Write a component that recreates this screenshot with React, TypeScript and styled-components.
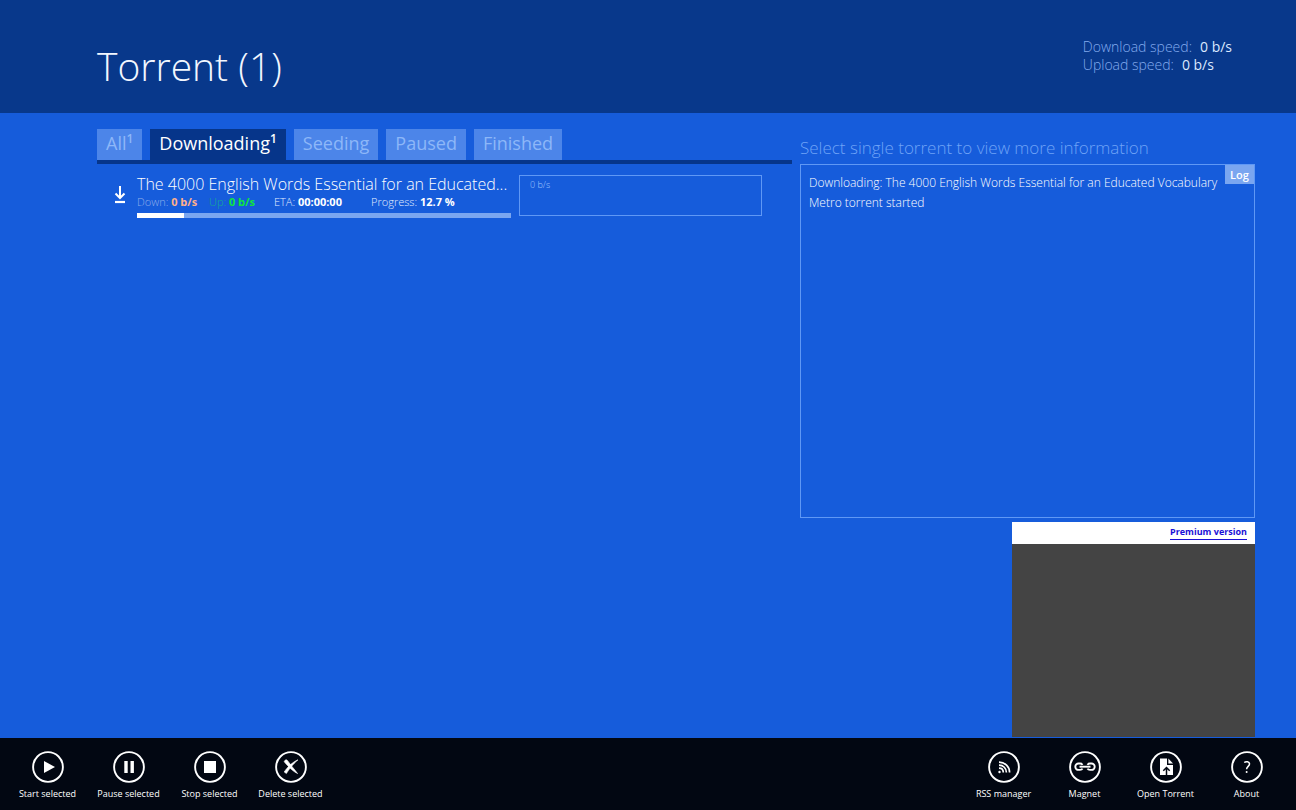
import React from "react";
import styled, { createGlobalStyle } from "styled-components";

const GlobalStyle = createGlobalStyle`
  * { box-sizing: border-box; }
  body {
    margin: 0;
    background: #165cdb;
    color: #fff;
    font-family: "Open Sans", "Noto Sans", sans-serif;
  }
  button { font: inherit; color: inherit; border: 0; margin: 0; cursor: pointer; }
`;

const Page = styled.div`
  min-height: 100vh;
  display: flex;
  flex-direction: column;
`;

const Header = styled.header`
  height: 113px;
  padding: 0 64px 0 97px;
  background: #08388b;
  display: flex;
  justify-content: space-between;
  align-items: flex-start;
`;

const Title = styled.h1`
  margin: 36px 0 0;
  font-size: 39px;
  line-height: 60px;
  font-weight: 300;
  color: #f2f7ff;
`;

const Speeds = styled.dl`
  margin: 38px 0 0;
  font-size: 14px;
  line-height: 18px;
`;

const Speed = styled.div`
  display: flex;
  gap: 8px;
  dt { font-weight: 300; color: #83abee; }
  dd { margin: 0; color: #dce9ff; }
`;

const Main = styled.main`
  flex: 1;
  display: grid;
  grid-template-columns: minmax(0, 695fr) minmax(0, 455fr);
  gap: 8px;
  padding: 16px 41px 0 97px;
`;

const Tabs = styled.div`
  display: flex;
  gap: 8px;
  border-bottom: 4px solid #06358a;
`;

const Tab = styled.button<{ $active?: boolean }>`
  && { color: ${(p) => (p.$active ? "#fff" : "#8db7f8")}; }
  height: 31px;
  padding: 0 9px 2px;
  background: ${(p) => (p.$active ? "#06358a" : "#4c85e9")};
  font-size: 18px;
  line-height: 29px;
  white-space: nowrap;
  sup { font-size: 12px; line-height: 1px; vertical-align: 7px; font-weight: 600; }
`;

const Torrent = styled.article`
  display: grid;
  grid-template-columns: 24px minmax(0, 374fr) minmax(0, 243fr);
  column-gap: 8px;
  padding: 11px 30px 0 8px;
`;

const TorrentIcon = styled.svg`
  width: 14px;
  height: 19px;
  margin: 10px 0 0 8px;
`;

const Name = styled.h2`
  margin: 0;
  font-size: 16px;
  line-height: 18px;
  font-weight: 300;
  white-space: nowrap;
`;

const Stats = styled.div`
  display: grid;
  grid-template-columns: 72px 65px 97px auto;
  font-size: 11px;
  line-height: 18px;
  white-space: nowrap;
`;

const Stat = styled.span<{ $label?: string; $value?: string }>`
  font-weight: 300;
  color: ${(p) => p.$label ?? "#e3eeff"};
  b { color: ${(p) => p.$value ?? "#fff"}; font-weight: 700; }
`;

const Track = styled.div`
  height: 5px;
  margin-top: 2px;
  background: #7aa6f0;
`;

const Fill = styled.div`
  height: 100%;
  background: #fff;
`;

const Chart = styled.div`
  height: 41px;
  padding: 3px 10px;
  border: 1px solid #5f98f5;
  font-size: 9px;
  line-height: 12px;
  font-weight: 300;
  color: #a3c6ff;
`;

const Side = styled.aside`
  display: flex;
  flex-direction: column;
`;

const Hint = styled.h2`
  margin: 4px 0 2px;
  font-size: 17px;
  line-height: 29px;
  font-weight: 300;
  color: #6fa3f7;
  white-space: nowrap;
`;

const LogBox = styled.section`
  position: relative;
  flex: 1;
  min-height: 120px;
  padding: 8px;
  border: 1px solid #5f98f5;
  font-size: 12px;
  line-height: 20px;
  font-weight: 300;
  color: #fff;
  white-space: nowrap;
  p { margin: 0; }
`;

const LogTab = styled.button`
  position: absolute;
  top: 0;
  right: 0;
  width: 29px;
  height: 19px;
  padding: 0;
  background: #7aa6f0;
  font-size: 12px;
  && { font-weight: 600; font-size: 11px; line-height: 18px; }
`;

const Ad = styled.section`
  align-self: flex-end;
  width: 243px;
  margin: 4px 0 1px;
  background: #444;
`;

const AdBar = styled.div`
  display: flex;
  justify-content: flex-end;
  height: 22px;
  padding: 2px 8px 0;
  background: #fff;
`;

const AdLink = styled.a`
  height: 16px;
  border-bottom: 1px solid #1a0fd6;
  color: #1a0fd6;
  font-size: 9px;
  line-height: 15px;
  font-weight: 700;
  text-decoration: none;
`;

const AdBody = styled.div`
  height: 193px;
`;

const AppBar = styled.footer`
  display: flex;
  justify-content: space-between;
  height: 72px;
  padding: 0 9px 0 7px;
  background: #020712;
`;

const Group = styled.div`
  display: flex;
`;

const Command = styled.button`
  width: 81px;
  padding: 13px 0 0;
  background: none;
  display: flex;
  flex-direction: column;
  align-items: center;
  && { font-size: 9px; line-height: 22px; }
  white-space: nowrap;
  svg { width: 32px; height: 32px; flex: none; }
`;

const icons: Record<string, React.ReactNode> = {
  play: <path d="M12 10v12l11-6z" fill="#fff" />,
  pause: <path d="M11.300 10h3.400v12h-3.400zM17.500 10h3.400v12h-3.400z" fill="#fff" />,
  stop: <path d="M10 10h12v12H10z" fill="#fff" />,
  remove: (
    <g fill="#fff" stroke="#fff" strokeWidth="0.600" strokeLinejoin="round">
      <path d="M9.200 10.800C9.900 8.600 11.600 8.200 12.800 9.900C15.400 13.600 18.800 17.600 22.600 22.600C18 20.600 13.300 15.600 9.200 10.800z" />
      <path d="M23 8.800C18 10.800 12.400 15.900 9.200 21L11.400 22.500C14.200 17.800 18.200 12.900 23 8.800z" />
    </g>
  ),
  rss: (
    <>
      <circle cx="11.500" cy="21" r="1.200" fill="#fff" />
      <path d="M11 17.200c2.600 0 4.300 1.700 4.300 4.300M11 14.200c4.300 0 7.400 3 7.400 7.300M11 11.200c6 0 10.600 4.400 10.600 10.300" stroke="#fff" strokeWidth="1.700" fill="none" />
    </>
  ),
  magnet: (
    <g stroke="#fff" strokeWidth="1.900" fill="none">
      <path d="M13.500 13.800C13 12.800 12.200 12.500 11 12.500H9.500a3.200 3.200 0 0 0 0 6.400H11c1.200 0 2-.3 2.500-1.300M18.500 13.800c.5-1 1.300-1.300 2.500-1.300h1.500a3.200 3.200 0 0 1 0 6.400H21c-1.200 0-2-.3-2.500-1.300" />
      <path d="M10.500 15.700h11" />
    </g>
  ),
  open: (
    <>
      <path d="M10 7.500h7v6.500h6v10H10z" fill="#fff" />
      <path d="M18.400 7.500l4.600 5h-4.600z" fill="#fff" />
      <path d="M16.500 24v-7M13.300 19.700l3.200-3.200 3.200 3.200" stroke="#020712" strokeWidth="1.500" fill="none" />
    </>
  ),
  about: (
    <>
      <path d="M13.200 11.500c1.800-1.300 5.300-1 5.300 1.500 0 2.300-2.900 2.500-2.900 5.200" stroke="#fff" strokeWidth="1.500" fill="none" />
      <circle cx="15.600" cy="20.900" r="1" fill="#fff" />
    </>
  ),
};

const AppCommand = ({ icon, label }: { icon: string; label: string }) => (
  <Command type="button">
    <svg viewBox="0 0 32 32" aria-hidden="true">
      <circle cx="16" cy="16" r="14.900" fill="none" stroke="#fff" strokeWidth="1.900" />
      {icons[icon]}
    </svg>
    {label}
  </Command>
);

const progress = 12.7;

export default function App() {
  return (
    <Page>
      <GlobalStyle />
      <Header>
        <Title>Torrent (1)</Title>
        <Speeds>
          <Speed><dt>Download speed:</dt><dd>0 b/s</dd></Speed>
          <Speed><dt>Upload speed:</dt><dd>0 b/s</dd></Speed>
        </Speeds>
      </Header>
      <Main>
        <section>
          <Tabs>
            <Tab type="button">All<sup>1</sup></Tab>
            <Tab type="button" $active>Downloading<sup>1</sup></Tab>
            <Tab type="button">Seeding</Tab>
            <Tab type="button">Paused</Tab>
            <Tab type="button">Finished</Tab>
          </Tabs>
          <Torrent>
            <TorrentIcon viewBox="0 0 14 19" fill="none" stroke="#fff" aria-hidden="true">
              <path d="M7 1v12M2.500 8.500L7 13l4.500-4.500" strokeWidth="2" />
              <path d="M2 17h10" strokeWidth="2.200" />
            </TorrentIcon>
            <div>
              <Name>The 4000 English Words Essential for an Educated...</Name>
              <Stats>
                <Stat $label="#8fadea" $value="#ffb08a">Down: <b>0 b/s</b></Stat>
                <Stat $label="#14b08c" $value="#10e63c">Up: <b>0 b/s</b></Stat>
                <Stat>ETA: <b>00:00:00</b></Stat>
                <Stat>Progress: <b>12.7 %</b></Stat>
              </Stats>
              <Track role="progressbar" aria-label="Progress" aria-valuenow={progress}>
                <Fill style={{ width: `${progress}%` }} />
              </Track>
            </div>
            <Chart>0 b/s</Chart>
          </Torrent>
        </section>
        <Side>
          <Hint>Select single torrent to view more information</Hint>
          <LogBox>
            <p>Downloading: The 4000 English Words Essential for an Educated Vocabulary</p>
            <p>Metro torrent started</p>
            <LogTab type="button">Log</LogTab>
          </LogBox>
          <Ad>
            <AdBar><AdLink href="#premium">Premium version</AdLink></AdBar>
            <AdBody />
          </Ad>
        </Side>
      </Main>
      <AppBar>
        <Group>
          <AppCommand icon="play" label="Start selected" />
          <AppCommand icon="pause" label="Pause selected" />
          <AppCommand icon="stop" label="Stop selected" />
          <AppCommand icon="remove" label="Delete selected" />
        </Group>
        <Group>
          <AppCommand icon="rss" label="RSS manager" />
          <AppCommand icon="magnet" label="Magnet" />
          <AppCommand icon="open" label="Open Torrent" />
          <AppCommand icon="about" label="About" />
        </Group>
      </AppBar>
    </Page>
  );
}
